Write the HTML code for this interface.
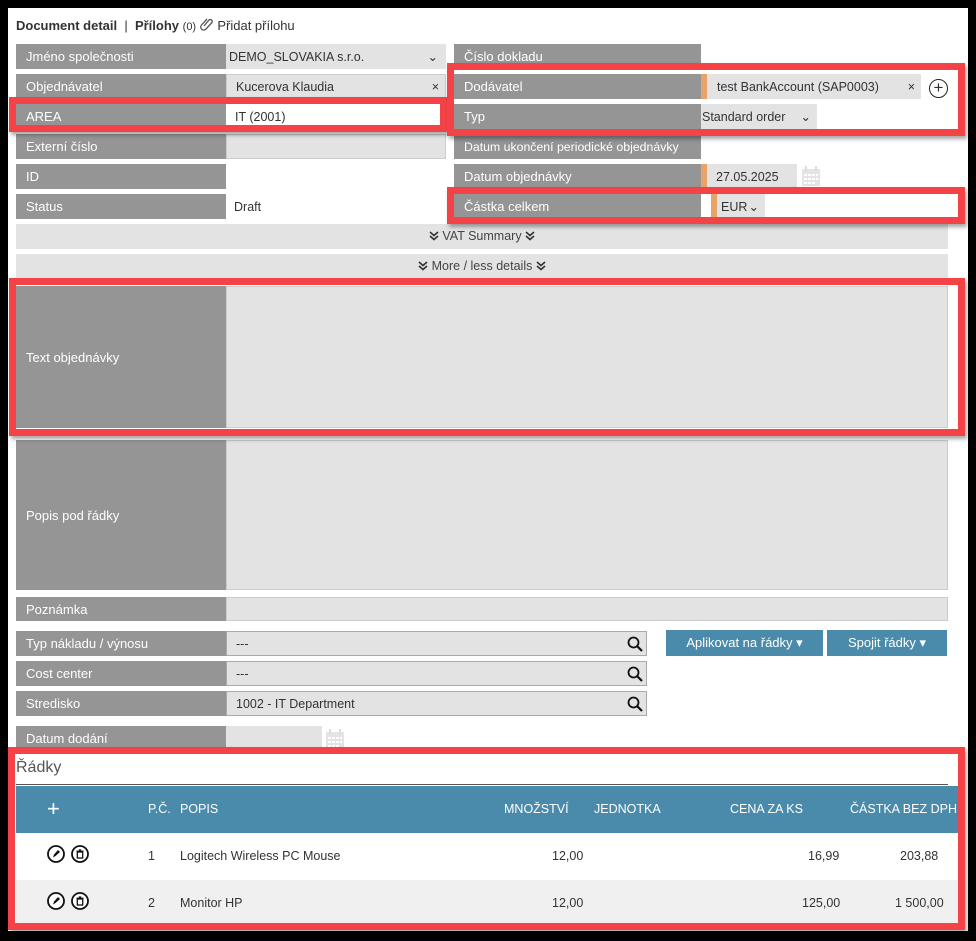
<!DOCTYPE html>
<html><head><meta charset="utf-8"><style>
*{box-sizing:border-box;margin:0;padding:0}
body{width:976px;height:941px;background:#000;position:relative;overflow:hidden;font-family:"Liberation Sans",sans-serif;font-size:13px;color:#333}
.page{position:absolute;left:8px;top:8px;width:960px;height:923px;background:#fff}
.a{position:absolute}
.l{position:absolute;background:#959595;color:#fff;padding-left:10px;display:flex;align-items:center;font-size:13px;white-space:nowrap;overflow:hidden}
.v{position:absolute;background:#e3e3e3;display:flex;align-items:center;padding-left:9px;font-size:12.5px;color:#333}
.bar{position:absolute;left:16px;width:932px;background:#e3e3e3;text-align:center;font-size:12.5px;color:#444;line-height:24px}
.red{position:absolute;border:7px solid #f44347;box-shadow:2px 3px 4px rgba(0,0,0,.35)}
.btn{position:absolute;background:#4a8bab;color:#fff;display:flex;align-items:center;justify-content:center;font-size:13px}
.th{position:absolute;color:#fff;font-size:12.5px;top:802px}
.td{position:absolute;font-size:12.5px;color:#333}
.ic{position:absolute;width:18px;height:18px}
.cal{position:absolute;width:18px;height:20px}
.srch{position:absolute;right:3px;top:4px}
</style></head><body>
<svg width="0" height="0" style="position:absolute"><defs>
<symbol id="dc" viewBox="0 0 10 10"><path d="M1 1l4 3.5 4-3.5M1 5l4 3.5 4-3.5" fill="none" stroke="#333" stroke-width="1.6"/></symbol>
<symbol id="sr" viewBox="0 0 16 16"><circle cx="6.5" cy="6.5" r="5" fill="none" stroke="#111" stroke-width="1.8"/><path d="M10 10l5 5" stroke="#111" stroke-width="2.2"/></symbol>
<symbol id="ca" viewBox="0 0 18 20"><rect x="0" y="3" width="18" height="17" fill="#e4e4e4"/><path d="M4 0v5M14 0v5" stroke="#ddd" stroke-width="2"/><g fill="#fff"><rect x="2" y="8" width="3" height="2"/><rect x="6" y="8" width="3" height="2"/><rect x="10" y="8" width="3" height="2"/><rect x="14" y="8" width="2" height="2"/><rect x="2" y="12" width="3" height="2"/><rect x="6" y="12" width="3" height="2"/><rect x="10" y="12" width="3" height="2"/><rect x="14" y="12" width="2" height="2"/><rect x="2" y="16" width="3" height="2"/><rect x="6" y="16" width="3" height="2"/><rect x="10" y="16" width="3" height="2"/></g></symbol>
<symbol id="pe" viewBox="0 0 18 18"><circle cx="9" cy="9" r="8" fill="#fff" stroke="#111" stroke-width="1.8"/><path d="M6 12.5l1-3 4-4.5 2 2-4.5 4z" fill="#111"/></symbol>
<symbol id="tr" viewBox="0 0 18 18"><circle cx="9" cy="9" r="8" fill="#fff" stroke="#111" stroke-width="1.8"/><rect x="6.3" y="7" width="5.4" height="6" fill="none" stroke="#111" stroke-width="1.3"/><path d="M5.5 6.3h7M7.8 5h2.4" stroke="#111" stroke-width="1.3"/></symbol>
</defs></svg>
<div class="page"></div>
<div class="a" style="left:16px;top:17px;font-size:13px;color:#333"><b>Document detail</b> &nbsp;|&nbsp; <b>Přílohy</b> <span style="font-size:11px">(0)</span> <svg width="14" height="14" viewBox="0 0 14 14" style="vertical-align:-1px"><path d="M4 9l5-6a2 2 0 013 2.5L6 12a3 3 0 01-4.5-4L7 2" fill="none" stroke="#555" stroke-width="1.3"/></svg> Přidat přílohu</div>

<div class="l" style="left:16px;top:44px;width:210px;height:25px">Jméno společnosti</div>
<div class="v" style="left:226px;top:44px;width:220px;height:25px;padding-left:3px">DEMO_SLOVAKIA s.r.o.<span style="position:absolute;right:8px">⌄</span></div>
<div class="l" style="left:16px;top:74px;width:210px;height:25px">Objednávatel</div>
<div class="v" style="left:226px;top:74px;width:220px;height:25px;border:1px solid #ccc">Kucerova Klaudia<span style="position:absolute;right:6px">×</span></div>
<div class="l" style="left:16px;top:104px;width:210px;height:25px">AREA</div>
<div class="v" style="left:226px;top:104px;width:220px;height:25px;background:#fff">IT (2001)</div>
<div class="l" style="left:16px;top:134px;width:210px;height:25px">Externí číslo</div>
<div class="v" style="left:226px;top:134px;width:220px;height:25px;border:1px solid #ccc"></div>
<div class="l" style="left:16px;top:164px;width:210px;height:25px">ID</div>
<div class="l" style="left:16px;top:194px;width:210px;height:25px">Status</div>
<div class="td" style="left:234px;top:200px">Draft</div>

<div class="l" style="left:454px;top:44px;width:247px;height:25px">Číslo dokladu</div>
<div class="l" style="left:454px;top:74px;width:247px;height:25px">Dodávatel</div>
<div class="v" style="left:701px;top:74px;width:220px;height:25px;border-left:6px solid #e8a36a;padding-left:10px">test BankAccount (SAP0003)<span style="position:absolute;right:6px">×</span></div>
<div class="a" style="left:929px;top:79px;width:19px;height:19px;border:1.5px solid #222;border-radius:50%;text-align:center;line-height:16px;font-size:17px">+</div>
<div class="l" style="left:454px;top:104px;width:247px;height:25px">Typ</div>
<div class="v" style="left:701px;top:104px;width:116px;height:25px;padding-left:1px">Standard order<span style="position:absolute;right:6px">⌄</span></div>
<div class="l" style="left:454px;top:134px;width:247px;height:25px;font-size:12.3px;padding-left:10px">Datum ukončení periodické objednávky</div>
<div class="l" style="left:454px;top:164px;width:247px;height:25px">Datum objednávky</div>
<div class="v" style="left:701px;top:164px;width:96px;height:25px;border-left:6px solid #e8a36a">27.05.2025</div>
<svg class="cal" style="left:802px;top:166px"><use href="#ca"/></svg>
<div class="l" style="left:454px;top:194px;width:247px;height:25px">Částka celkem</div>
<div class="v" style="left:711px;top:194px;width:54px;height:25px;border-left:6px solid #e8a36a;padding-left:4px">EUR<span style="position:absolute;right:6px">⌄</span></div>

<div class="bar" style="top:224px;height:25px"><svg width="10" height="10" style="vertical-align:-1px"><use href="#dc"/></svg> VAT Summary <svg width="10" height="10" style="vertical-align:-1px"><use href="#dc"/></svg></div>
<div class="bar" style="top:254px;height:24px"><svg width="10" height="10" style="vertical-align:-1px"><use href="#dc"/></svg> More / less details <svg width="10" height="10" style="vertical-align:-1px"><use href="#dc"/></svg></div>

<div class="l" style="left:16px;top:286px;width:210px;height:142px">Text objednávky</div>
<div class="v" style="left:226px;top:286px;width:722px;height:142px;border:1px solid #ccc"></div>
<div class="l" style="left:16px;top:440px;width:210px;height:150px">Popis pod řádky</div>
<div class="v" style="left:226px;top:440px;width:722px;height:150px;border:1px solid #ccc"></div>
<div class="l" style="left:16px;top:597px;width:210px;height:24px">Poznámka</div>
<div class="v" style="left:226px;top:597px;width:722px;height:24px;border:1px solid #ccc"></div>

<div class="l" style="left:16px;top:631px;width:210px;height:25px">Typ nákladu / výnosu</div>
<div class="v" style="left:226px;top:631px;width:421px;height:25px;border:1px solid #aaa">---<svg class="srch" width="16" height="16"><use href="#sr"/></svg></div>
<div class="l" style="left:16px;top:661px;width:210px;height:25px">Cost center</div>
<div class="v" style="left:226px;top:661px;width:421px;height:25px;border:1px solid #aaa">---<svg class="srch" width="16" height="16"><use href="#sr"/></svg></div>
<div class="l" style="left:16px;top:691px;width:210px;height:25px">Stredisko</div>
<div class="v" style="left:226px;top:691px;width:421px;height:25px;border:1px solid #aaa">1002 - IT Department<svg class="srch" width="16" height="16"><use href="#sr"/></svg></div>
<div class="btn" style="left:666px;top:630px;width:157px;height:26px">Aplikovat na řádky ▾</div>
<div class="btn" style="left:827px;top:630px;width:120px;height:26px">Spojit řádky ▾</div>
<div class="l" style="left:16px;top:726px;width:210px;height:25px">Datum dodání</div>
<div class="v" style="left:226px;top:726px;width:96px;height:25px"></div>
<svg class="cal" style="left:326px;top:729px"><use href="#ca"/></svg>

<div class="a" style="left:16px;top:755px;width:932px;height:30px;background:#fff;border-bottom:1px solid #555"></div>
<div class="a" style="left:16px;top:759px;font-size:16px;color:#555">Řádky</div>
<div class="a" style="left:16px;top:786px;width:944px;height:47px;background:#4a8bab"></div>
<div class="a" style="left:16px;top:833px;width:944px;height:47px;background:#fff"></div>
<div class="a" style="left:16px;top:880px;width:944px;height:44px;background:#f0f0f0"></div>
<div class="th" style="left:47px;top:796px;font-size:22px">+</div>
<div class="th" style="left:148px">P.Č.</div>
<div class="th" style="left:180px">POPIS</div>
<div class="th" style="left:504px">MNOŽSTVÍ</div>
<div class="th" style="left:594px">JEDNOTKA</div>
<div class="th" style="left:730px">CENA ZA KS</div>
<div class="th" style="left:850px">ČÁSTKA BEZ DPH</div>
<svg class="ic" style="left:47px;top:845px"><use href="#pe"/></svg><svg class="ic" style="left:71px;top:845px"><use href="#tr"/></svg>
<svg class="ic" style="left:47px;top:892px"><use href="#pe"/></svg><svg class="ic" style="left:71px;top:892px"><use href="#tr"/></svg>
<div class="td" style="left:148px;top:849px">1</div><div class="td" style="left:180px;top:849px">Logitech Wireless PC Mouse</div>
<div class="td" style="left:552px;top:849px">12,00</div><div class="td" style="left:808px;top:849px">16,99</div><div class="td" style="left:900px;top:849px">203,88</div>
<div class="td" style="left:148px;top:896px">2</div><div class="td" style="left:180px;top:896px">Monitor HP</div>
<div class="td" style="left:552px;top:896px">12,00</div><div class="td" style="left:802px;top:896px">125,00</div><div class="td" style="left:895px;top:896px">1 500,00</div>

<div class="red" style="left:9px;top:97px;width:438px;height:35px"></div>
<div class="red" style="left:447px;top:63px;width:518px;height:73px"></div>
<div class="red" style="left:447px;top:187px;width:518px;height:37px"></div>
<div class="red" style="left:9px;top:278px;width:956px;height:158px"></div>
<div class="red" style="left:8px;top:747px;width:957px;height:183px"></div>
</body></html>
